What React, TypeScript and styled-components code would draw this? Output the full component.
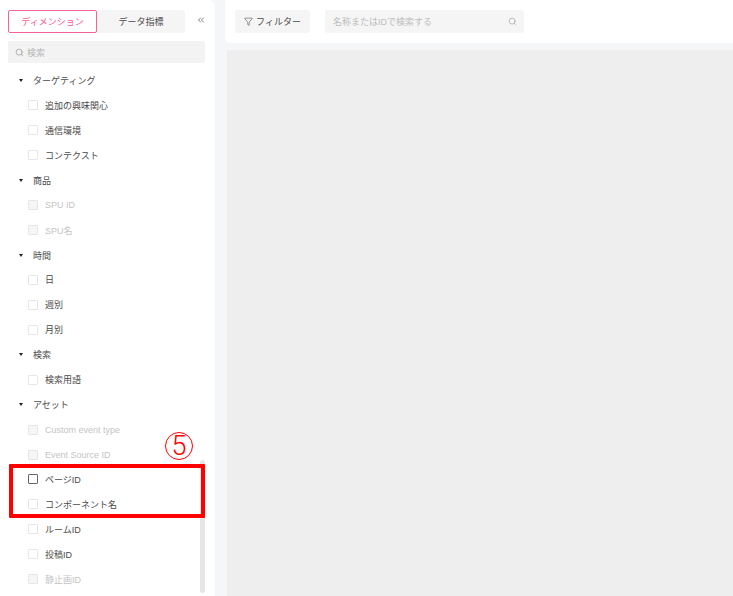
import React from "react";
import styled, { createGlobalStyle } from "styled-components";
import { Search, Filter, ChevronsLeft } from "lucide-react";

const GlobalStyle = createGlobalStyle`
  html, body {
    margin: 0;
    padding: 0;
    height: 100%;
    overflow: hidden;
    background: #f5f6f7;
    font-family: "Liberation Sans", "Noto Sans CJK JP", sans-serif;
  }
`;

const Page = styled.div`
  position: relative;
  display: flex;
  width: 733px;
  height: 596px;
  overflow: hidden;
`;

const Sidebar = styled.aside`
  position: relative;
  width: 215px;
  flex-shrink: 0;
  box-sizing: border-box;
  padding: 10px 10px 0 8px;
  background: #fff;
  border-radius: 0 6px 0 0;
`;

const TabRow = styled.div`
  display: flex;
  align-items: center;
  height: 23px;
`;

const Tab = styled.div<{ $active?: boolean }>`
  width: ${(p) => (p.$active ? "89px" : "88px")};
  height: 23px;
  flex-shrink: 0;
  box-sizing: border-box;
  display: flex;
  align-items: center;
  justify-content: center;
  font-size: 9px;
  color: ${(p) => (p.$active ? "#f45d8e" : "#4a4a4a")};
  background: ${(p) => (p.$active ? "#fff" : "#f5f5f5")};
  border: ${(p) => (p.$active ? "1px solid #f9609a" : "none")};
  border-radius: ${(p) => (p.$active ? "2px" : "0 3px 3px 0")};
`;

const Collapse = styled.div`
  margin: 0 0 4px 11px;
  display: flex;
  color: #666;
`;

const SearchBox = styled.div`
  margin-top: 8px;
  height: 22px;
  width: 197px;
  box-sizing: border-box;
  display: flex;
  align-items: center;
  gap: 3px;
  padding-left: 7px;
  background: #f3f3f3;
  border-radius: 2px;
  font-size: 9px;
  color: #b5b5b5;
`;

const Tree = styled.div`
  margin-top: 5px;
`;

const GroupRow = styled.div`
  display: flex;
  align-items: center;
  height: 24.95px;
  padding-left: 10px;
  font-size: 9px;
  color: #4a4a4a;
`;

const Caret = styled.span`
  width: 0;
  height: 0;
  margin-right: 10px;
  margin-left: 1px;
  border-left: 2.5px solid transparent;
  border-right: 2.5px solid transparent;
  border-top: 3.5px solid #222;
`;

const ItemRow = styled.div`
  display: flex;
  align-items: center;
  height: 24.95px;
  padding-left: 20px;
`;

const Box = styled.span<{ $dim?: boolean; $dark?: boolean }>`
  width: 8px;
  height: 8px;
  flex-shrink: 0;
  border: 1px solid ${(p) => (p.$dark ? "#666" : "#e6e6e6")};
  border-radius: 1px;
  background: ${(p) => (p.$dim ? "#f6f6f6" : "#fff")};
`;

const ItemLabel = styled.span<{ $dim?: boolean }>`
  margin-left: 7px;
  font-size: 9px;
  white-space: nowrap;
  color: ${(p) => (p.$dim ? "#c4c4c4" : "#4a4a4a")};
`;

const Scrollbar = styled.div`
  position: absolute;
  left: 200px;
  top: 460px;
  width: 5px;
  height: 133px;
  background: #e6e6e6;
  border-radius: 3px;
`;

const Content = styled.main`
  flex: 1;
  min-width: 0;
  padding-left: 10px;
  display: flex;
  flex-direction: column;
`;

const Toolbar = styled.div`
  height: 43px;
  flex-shrink: 0;
  box-sizing: border-box;
  display: flex;
  align-items: center;
  gap: 15px;
  padding: 0 0 0 10px;
  background: #fff;
  border-radius: 0 0 0 6px;
`;

const FilterButton = styled.div`
  width: 75px;
  height: 23px;
  display: flex;
  align-items: center;
  justify-content: center;
  gap: 3px;
  font-size: 9px;
  color: #4a4a4a;
  background: #f5f5f5;
  border-radius: 3px;
`;

const ToolbarSearch = styled.div`
  width: 199px;
  height: 23px;
  box-sizing: border-box;
  display: flex;
  align-items: center;
  justify-content: space-between;
  padding: 0 7px 0 8px;
  font-size: 9px;
  color: #bdbdbd;
  background: #f5f5f5;
  border-radius: 3px;
`;

const Canvas = styled.div`
  flex: 1;
  margin: 7px 0 0 2px;
  background: #eee;
`;

const Highlight = styled.div`
  position: absolute;
  left: 9px;
  top: 464px;
  width: 196px;
  height: 54px;
  box-sizing: border-box;
  border: 4px solid #ff0000;
  border-radius: 1px;
`;

const Marker = styled.div`
  position: absolute;
  left: 165px;
  top: 432px;
  width: 28px;
  height: 28px;
  box-sizing: border-box;
  display: flex;
  align-items: center;
  justify-content: center;
  border: 1px solid #ff0000;
  border-radius: 50%;
  font-family: Roboto, sans-serif;
  font-size: 27px;
  font-weight: 300;
  line-height: 28px;
  color: #ff0000;
`;

type Item = { label: string; dim?: boolean; dark?: boolean };
type Group = { title: string; items: Item[] };

const groups: Group[] = [
  {
    title: "ターゲティング",
    items: [{ label: "追加の興味関心" }, { label: "通信環境" }, { label: "コンテクスト" }],
  },
  {
    title: "商品",
    items: [
      { label: "SPU ID", dim: true },
      { label: "SPU名", dim: true },
    ],
  },
  {
    title: "時間",
    items: [{ label: "日" }, { label: "週別" }, { label: "月別" }],
  },
  { title: "検索", items: [{ label: "検索用語" }] },
  {
    title: "アセット",
    items: [
      { label: "Custom event type", dim: true },
      { label: "Event Source ID", dim: true },
      { label: "ページID", dark: true },
      { label: "コンポーネント名" },
      { label: "ルームID" },
      { label: "投稿ID" },
      { label: "静止画ID", dim: true },
    ],
  },
];

const App: React.FC = () => {
  return (
    <Page>
      <GlobalStyle />
      <Sidebar>
        <TabRow>
          <Tab $active>ディメンション</Tab>
          <Tab>データ指標</Tab>
          <Collapse>
            <ChevronsLeft size={10} strokeWidth={2} />
          </Collapse>
        </TabRow>
        <SearchBox>
          <Search size={9} color="#999" />
          検索
        </SearchBox>
        <Tree>
          {groups.map((group) => (
            <React.Fragment key={group.title}>
              <GroupRow>
                <Caret />
                {group.title}
              </GroupRow>
              {group.items.map((item) => (
                <ItemRow key={item.label}>
                  <Box $dim={item.dim} $dark={item.dark} />
                  <ItemLabel $dim={item.dim}>{item.label}</ItemLabel>
                </ItemRow>
              ))}
            </React.Fragment>
          ))}
        </Tree>
        <Scrollbar />
      </Sidebar>
      <Content>
        <Toolbar>
          <FilterButton>
            <Filter size={9} strokeWidth={1.5} />
            フィルター
          </FilterButton>
          <ToolbarSearch>
            名称またはIDで検索する
            <Search size={9} color="#aaa" />
          </ToolbarSearch>
        </Toolbar>
        <Canvas />
      </Content>
      <Highlight />
      <Marker>5</Marker>
    </Page>
  );
};

export default App;
